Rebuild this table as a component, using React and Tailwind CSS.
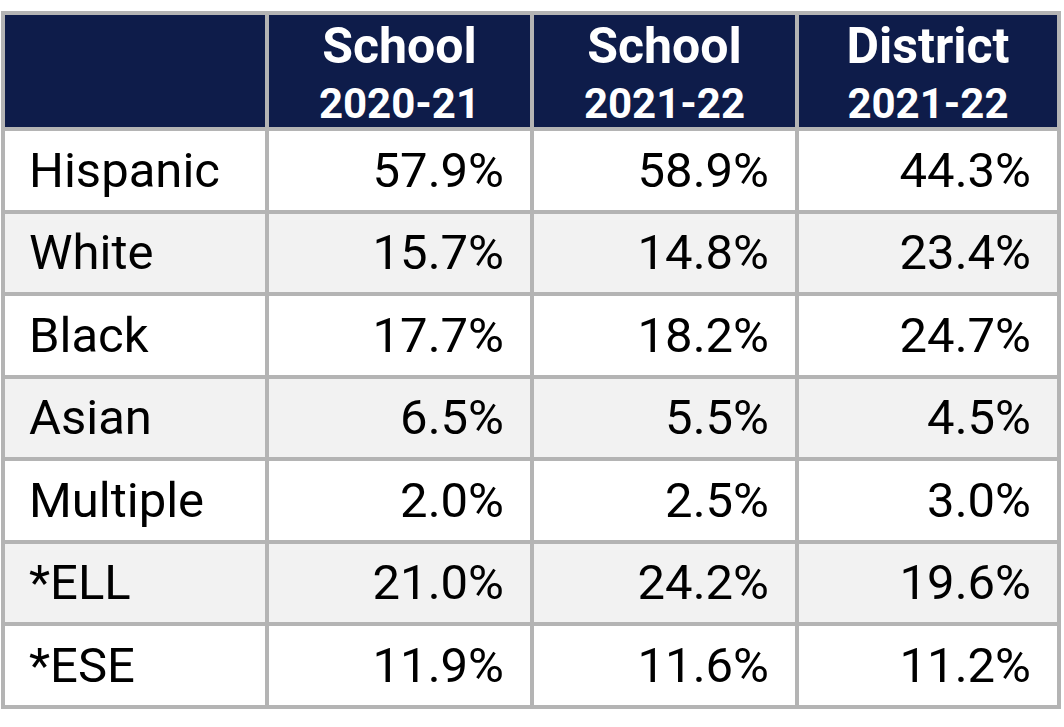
import React from "react";

const rows = [
  ["Hispanic", "57.9%", "58.9%", "44.3%"],
  ["White", "15.7%", "14.8%", "23.4%"],
  ["Black", "17.7%", "18.2%", "24.7%"],
  ["Asian", "6.5%", "5.5%", "4.5%"],
  ["Multiple", "2.0%", "2.5%", "3.0%"],
  ["*ELL", "21.0%", "24.2%", "19.6%"],
  ["*ESE", "11.9%", "11.6%", "11.2%"],
];

const heads = [
  ["School", "2020-21"],
  ["School", "2021-22"],
  ["District", "2021-22"],
];

export default function App() {
  return (
    <div className="w-[1064px] h-[727px] bg-white pt-[11px] pl-[1px]" style={{ fontFamily: "Roboto, 'Liberation Sans', sans-serif" }}>
      <div className="grid w-[1060px] grid-cols-[260px_261px_261px_258px] grid-rows-[112px_79px_78px_79px_78px_79px_78px_79px] gap-[4px] p-[4px] bg-[#b4b4b4]">
        <div className="bg-[#0e1c4a]" />
        {heads.map((h, i) => (
          <div key={i} className="bg-[#0e1c4a] flex flex-col items-center pt-[6px] text-white font-bold leading-none">
            <div className="text-[50px]">{h[0]}</div>
            <div className="text-[42px] mt-[12px]">{h[1]}</div>
          </div>
        ))}
        {rows.map((r, ri) => {
          const bg = ri % 2 === 1 ? "bg-[#f2f2f2]" : "bg-white";
          return (
            <React.Fragment key={ri}>
              <div className={`${bg} flex items-center pl-[24px] text-[49px] text-black`}>{r[0]}</div>
              {r.slice(1).map((v, vi) => (
                <div key={vi} className={`${bg} flex items-center justify-end pr-[26px] text-[49px] text-black`}>{v}</div>
              ))}
            </React.Fragment>
          );
        })}
      </div>
    </div>
  );
}
